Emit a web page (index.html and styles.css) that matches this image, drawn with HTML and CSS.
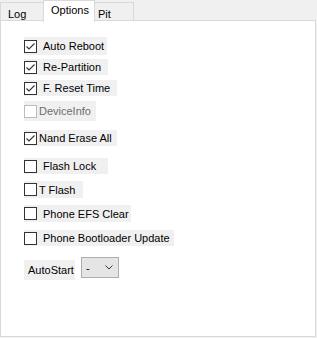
FILE: index.html
```html
<!DOCTYPE html>
<html>
<head>
<meta charset="utf-8">
<link rel="stylesheet" href="styles.css">
</head>
<body>
<div class="window">
  <div class="tabs">
    <div class="tab tab-log">Log</div>
    <div class="tab tab-options active">Options</div>
    <div class="tab tab-pit">Pit</div>
  </div>
  <div class="panel">
    <label class="row r1"><span class="box checked"><svg viewBox="0 0 11 11" width="11" height="11"><polyline points="1.5,5.5 4,8 9.5,2.5" /></svg></span><span class="text">Auto Reboot</span></label>
    <label class="row r2"><span class="box checked"><svg viewBox="0 0 11 11" width="11" height="11"><polyline points="1.5,5.5 4,8 9.5,2.5" /></svg></span><span class="text">Re-Partition</span></label>
    <label class="row r3"><span class="box checked"><svg viewBox="0 0 11 11" width="11" height="11"><polyline points="1.5,5.5 4,8 9.5,2.5" /></svg></span><span class="text">F. Reset Time</span></label>
    <label class="row r4 disabled tight"><span class="box"></span><span class="text">DeviceInfo</span></label>
    <label class="row r5 tight"><span class="box checked"><svg viewBox="0 0 11 11" width="11" height="11"><polyline points="1.5,5.5 4,8 9.5,2.5" /></svg></span><span class="text">Nand Erase All</span></label>
    <label class="row r6"><span class="box"></span><span class="text">Flash Lock</span></label>
    <label class="row r7 tight"><span class="box"></span><span class="text">T Flash</span></label>
    <label class="row r8"><span class="box"></span><span class="text">Phone EFS Clear</span></label>
    <label class="row r9"><span class="box"></span><span class="text">Phone Bootloader Update</span></label>
    <div class="autostart">
      <span class="as-label">AutoStart</span>
      <div class="combo">
        <span class="combo-value">-</span>
        <svg class="chev" viewBox="0 0 8 5" width="8" height="5"><polyline points="0.5,0.5 4,4 7.5,0.5" /></svg>
      </div>
    </div>
  </div>
</div>
</body>
</html>
```
FILE: styles.css
```css
html, body {
  margin: 0;
  padding: 0;
  background: #f0f0f0;
}
body {
  font-family: "Liberation Sans", Arial, sans-serif;
  font-size: 11px;
  color: #000;
}
.window {
  width: 316px;
  height: 337px;
  display: flex;
  flex-direction: column;
}
.tabs {
  display: flex;
  align-items: flex-end;
  height: 21px;
}
.tab {
  box-sizing: border-box;
  height: 19px;
  border: 1px solid #d9d9d9;
  border-bottom: none;
  background: #f0f0f0;
  padding-top: 4px;
  padding-left: 7px;
  line-height: 14px;
}
.tab-log { width: 44px; }
.tab-options {
  width: 52px;
  margin-left: -1px;
}
.tab-pit {
  width: 40px;
  margin-left: -1px;
  padding-left: 3px;
}
.tab.active {
  height: 22px;
  background: #fff;
  padding-top: 2px;
  margin-bottom: -1px;
  position: relative;
  z-index: 1;
}
.panel {
  box-sizing: border-box;
  flex: 1;
  margin-top: -1px;
  background: #fff;
  border: 1px solid #d9d9d9;
  padding: 16px 0 0 23px;
  display: flex;
  flex-direction: column;
  align-items: flex-start;
}
.row {
  box-sizing: border-box;
  display: flex;
  align-items: center;
  background: #f0f0f0;
  gap: 6px;
  height: 16px;
}
.row.tight { gap: 2px; }
.box {
  box-sizing: border-box;
  width: 13px;
  height: 13px;
  border: 1px solid #333;
  background: #fff;
  display: flex;
  align-items: center;
  justify-content: center;
  flex: none;
}
.box svg polyline {
  fill: none;
  stroke: #333;
  stroke-width: 1.1;
}
.text {
  line-height: 14px;
  white-space: nowrap;
}
.disabled .box { border-color: #bcbcbc; }
.disabled .text { color: #6d6d6d; }
.r1 { width: 83px; height: 18px; }
.r2 { width: 84px; margin-top: 4px; }
.r3 { width: 93px; margin-top: 5px; }
.r4 { width: 72px; margin-top: 5px; height: 20px; }
.r5 { width: 93px; margin-top: 9px; }
.r6 { width: 84px; margin-top: 12px; }
.r7 { width: 59px; margin-top: 7px; height: 17px; }
.r8 { width: 107px; margin-top: 7px; height: 17px; }
.r9 { width: 150px; margin-top: 8px; }
.autostart {
  display: flex;
  align-items: flex-start;
  margin-top: 11px;
  gap: 6px;
}
.as-label {
  box-sizing: border-box;
  background: #f0f0f0;
  width: 51px;
  height: 20px;
  margin-top: 3px;
  padding-left: 4px;
  line-height: 20px;
}
.combo {
  box-sizing: border-box;
  width: 38px;
  height: 21px;
  background: #e5e5e5;
  border: 1px solid #adadad;
  display: flex;
  align-items: center;
  justify-content: space-between;
  padding: 0 5px 0 4px;
}
.combo-value { line-height: 14px; }
.chev polyline {
  fill: none;
  stroke: #333;
  stroke-width: 1;
}
```
